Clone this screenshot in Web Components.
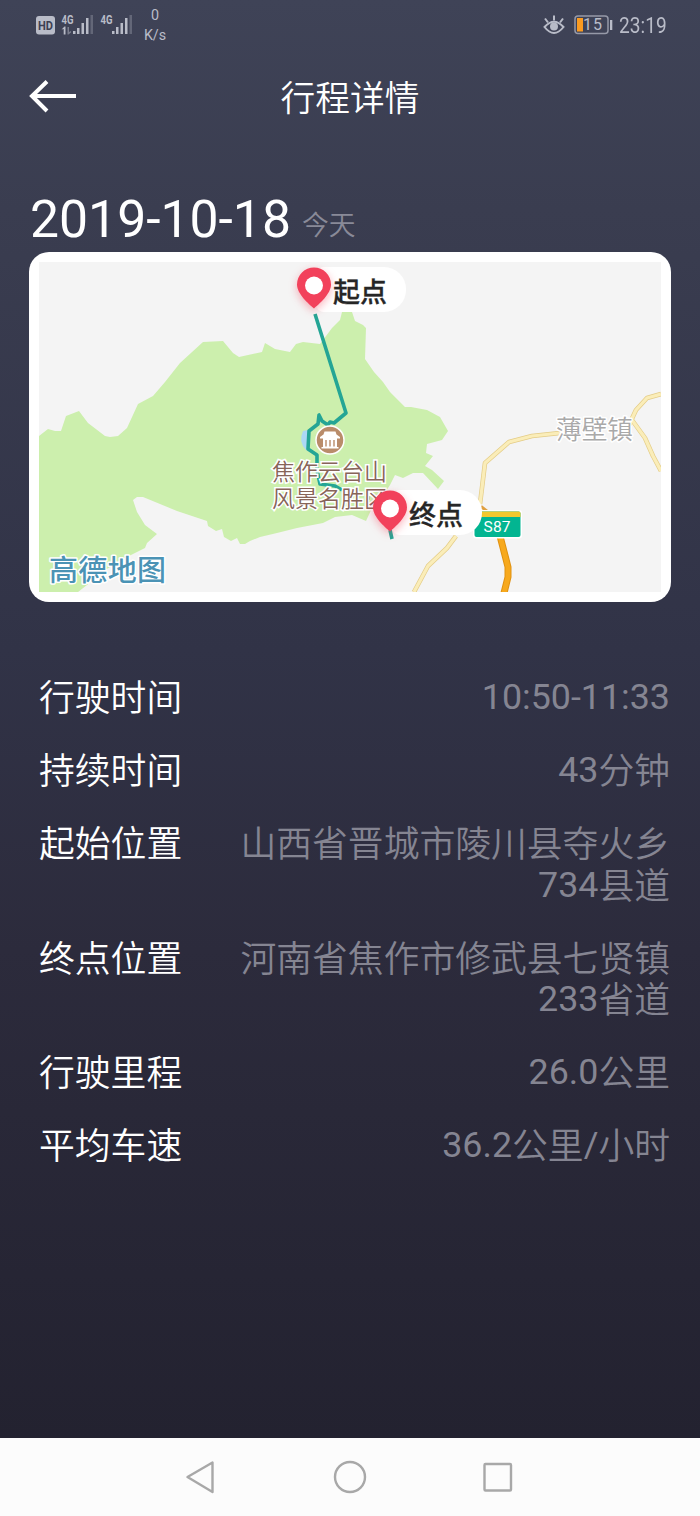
<!DOCTYPE html>
<html lang="zh-CN">
<head>
<meta charset="utf-8">
<title>行程详情</title>
<style>
html,body{margin:0;height:100%}
body{font-family:Roboto,"Noto Sans CJK SC",sans-serif}
</style>
</head>
<body>
<trip-page></trip-page>
<script>
const define = (name, html) => customElements.define(name, class extends HTMLElement {
  constructor() {
    super();
    const t = document.createElement('template');
    t.innerHTML = html;
    this.attachShadow({ mode: 'open' }).append(t.content.cloneNode(true));
  }
});

define('status-bar', `
<style>
:host{display:flex;height:50px;box-sizing:border-box;padding:0 33px 0 35px;justify-content:space-between;color:#b9bcc8}
.l,.r{display:flex;align-items:center}
svg{display:block}
.net{display:flex;flex-direction:column;align-items:center;font-size:14.300px;line-height:20px;margin-left:9px;width:24px;white-space:nowrap}
.batt{position:relative;width:39px;height:20px;margin:0 6px 0 9px}
.batt span{position:absolute;left:9px;top:0;font-size:16px;line-height:20px;letter-spacing:1px}
.time{font-size:22.5px;line-height:50px;width:48px;white-space:nowrap}
.time span{display:inline-block;transform:scaleX(.85);transform-origin:0 50%}
</style>
<div class="l">
<svg width="99" height="50" viewBox="35 0 99 50" fill="#b9bcc8" font-family="Roboto" font-weight="700">
<rect x="36" y="16" width="19" height="18.5" rx="3"/>
<text x="38" y="30" font-size="13" textLength="15" lengthAdjust="spacingAndGlyphs" fill="#3d4053">HD</text>
<text x="61.5" y="23.500" font-size="12" textLength="12" lengthAdjust="spacingAndGlyphs">4G</text>
<path d="M61.500 29.500l3-3h1v8h-1.800v-5.500z"/><path d="M67.500 27h1.500v5l2-1v1.500l-2.500 2h-1z" opacity=".5"/>
<rect x="73" y="31" width="2.500" height="3"/><rect x="77" y="28" width="2.500" height="6"/><rect x="81.500" y="23" width="2.500" height="11"/><rect x="86" y="18" width="2.500" height="16"/><rect x="90.500" y="15" width="2.500" height="19" opacity=".3"/>
<text x="100.500" y="23.500" font-size="12" textLength="12" lengthAdjust="spacingAndGlyphs">4G</text>
<rect x="112" y="31" width="2.500" height="3"/><rect x="116" y="27" width="2.500" height="7"/><rect x="120.500" y="23" width="2.500" height="11"/><rect x="125" y="18" width="2.500" height="16"/><rect x="129.500" y="15" width="2.500" height="19" opacity=".3"/>
</svg>
<div class="net"><span>0</span><span>K/s</span></div>
</div>
<div class="r">
<svg width="22" height="50" viewBox="543 0 22 50" fill="none" stroke="#b9bcc8" stroke-width="2">
<path d="M544.500 27Q554 16.500 563.500 27Q554 39 544.500 27Z"/><circle cx="554" cy="26.500" r="3" fill="#b9bcc8"/><path d="M554 20.500v-5M548 22.500l-3-4M560 22.500l3-4"/></svg>
<div class="batt"><svg width="39" height="20" viewBox="574 15 39 20"><rect x="575" y="16" width="33" height="17.500" rx="3" fill="none" stroke="#9699a8" stroke-width="1.500"/><rect x="577" y="18" width="6" height="13.500" fill="#fb9b20"/><rect x="610" y="20" width="2.300" height="10" fill="#b9bcc8"/></svg><span>15</span></div>
<div class="time"><span>23:19</span></div>
</div>`);

define('title-bar', `
<style>
:host{display:grid;grid-template-columns:48px 1fr 48px;align-items:center;height:92px;padding:0 28px;color:#fff}
h1{margin:0;text-align:center;font-weight:350;font-size:34.700px;line-height:50px;font-family:"Noto Sans CJK SC",sans-serif}
</style>
<svg width="50" height="40" viewBox="28 76 50 40" fill="none" stroke="#fff" stroke-width="4"><path d="M76 96H32M47 81.500L32 96l15 15"/></svg>
<h1><slot></slot></h1>`);

define('trip-date', `
<style>
:host{display:flex;align-items:baseline;height:110px;padding:0 30px;box-sizing:border-box;color:#fff;white-space:nowrap}
.d{font-size:51.700px;line-height:155px;width:272px}
.s{font-size:26.800px;color:#898a98;font-weight:350;line-height:1;transform:translateY(-2px)}
</style>
<span class="d"><slot></slot></span><span class="s"><slot name="note"></slot></span>`);

define('map-pin', `
<style>
:host{position:absolute;display:flex;align-items:flex-start;width:112px;height:46px}
svg{position:absolute;left:0;top:0;overflow:visible;filter:drop-shadow(0 3px 4px rgba(244,67,90,.4))}
.tag{margin-left:20px;width:90px;height:45px;border-radius:8px 22px 22px 8px;background:#fff;box-sizing:border-box;padding-left:17px;font:500 27px/47px "Noto Sans CJK SC",sans-serif;color:#262626;white-space:nowrap;-webkit-text-stroke:.3px #262626}
</style>
<div class="tag"><slot></slot></div>
<svg width="36" height="44" viewBox="0 0 36 44"><path d="M18 41.500C13 37 1 27 1 17.500a17 17 0 0 1 34 0C35 27 23 37 18 41.500Z" fill="#f2415b"/><circle cx="18" cy="18.500" r="9" fill="#fff"/></svg>`);

define('route-map', `
<style>
:host{display:block;position:relative;box-sizing:border-box;height:350px;margin:0 29px;padding:10px;border-radius:20px;background:#fff}
.m{display:block}
.spot{position:absolute;left:243px;top:205px;width:116px;font:350 23px/27px "Noto Sans CJK SC",sans-serif;color:#876459;word-break:break-all;-webkit-text-stroke:3px #fff;paint-order:stroke fill}
</style>
<svg class="m" width="622" height="330" viewBox="39 262 622 330" font-family="Noto Sans CJK SC" stroke-linejoin="round">
<rect x="39" y="262" width="622" height="330" fill="#f4f4f4"/>
<path fill="#ccefad" d="M39 436L48 429 55 431 61 431 66 416 79 411 88 423 105 436 110 437 118 436 127 428 138 404 153 396 165 382 180 363 203 342 223 341 233 353 239 357 262 352 265 343 275 349 290 352 296 344 303 342 320 344 332 328 340 320 342 312 352 312 355 321 363 325 366 328 365 359 374 372 383 382 390 392 405 407 411 407 427 410 440 417 448 431 442 440 427 444 426 453 433 456 425 466 432 470 444 481 438 489 423 473 413 473 403 478 395 475 390 485 380 500 372 508 366 521 352 515 335 517 323 523 297 528 277 533 260 537 250 541 245 544 240 544 237 538 231 541 224 537 222 529 216 531 208 526 207 521 177 511 160 504 143 497 137 497 133 500 137 512 145 525 157 534 147 543 145 548 127 557 105 570 87 585 78 592 39 592Z"/>
<path d="M480 504L485 463 509 442 532 436 560 433M661 394L647 398 636 410 629 425M632 420L645 438 653 456 661 471M456 536L447 548 428 566 414 592" fill="none" stroke="#e4cc86" stroke-width="4.600"/>
<path d="M480 504L485 463 509 442 532 436 560 433M661 394L647 398 636 410 629 425M632 420L645 438 653 456 661 471M456 536L447 548 428 566 414 592" fill="none" stroke="#faedb9" stroke-width="3.200"/>
<path d="M481 506.500L488 512" fill="none" stroke="#e0a040" stroke-width="3"/>
<path d="M500 536L508 567V577L504 593" fill="none" stroke="#e09110" stroke-width="7"/>
<path d="M500 536L508 567V577L504 593" fill="none" stroke="#f7a91d" stroke-width="5"/>
<path d="M303 431q-5 11 3 19l4 2-2-22z" fill="#acd8f5"/>
<path d="M315 314L346 413 334 423 330 422 328 425 322 421 319 415 318 424 309 431 308 449 317 455 317 470 320 484 335 486 342 490M365 498h5M390 530l2 9" fill="none" stroke="#24a595" stroke-width="3.600"/>
<circle cx="330" cy="440" r="14" fill="#b98c6a" stroke="#fff" stroke-width="1.500"/>
<path d="M324.500 431.500h11l1 3 3.500 2.500v1.500h-20v-1.500l3.500-2.500zM323 438h14v10h-14zM321.500 447h17v1.500h-17z" fill="#fff"/>
<path d="M326 440v6.500M330 440v6.500M334 440v6.500" stroke="#b98c6a" stroke-width="1.400"/>
<text x="556" y="438.500" font-size="25.700" fill="#a9a9a9" stroke="#fff" stroke-width="3" paint-order="stroke" font-weight="350">薄壁镇</text>
<rect x="473" y="510" width="49" height="28.500" rx="3" fill="#fff"/><rect x="474.500" y="511.500" width="46" height="25.500" rx="2" fill="#02b591"/><path d="M476 511.500h43q1.500 0 1.500 1.500v4h-46v-4z" fill="#f2c82e"/>
<text x="483.500" y="531.500" font-family="Roboto" font-size="15.500" textLength="27" fill="#fff">S87</text>
<text x="49" y="581" font-size="29" font-weight="500" textLength="117" fill="#4b93b5" stroke="#fff" stroke-width="3" paint-order="stroke">高德地图</text>
</svg>
<div class="spot">焦作云台山风景名胜区</div>
<map-pin style="left:267px;top:15px">起点</map-pin>
<map-pin style="left:343px;top:238px">终点</map-pin>`);

define('detail-row', `
<style>
:host{display:flex;justify-content:space-between;align-items:flex-start;font-size:35.800px;line-height:41.500px;font-weight:350}
.k{color:#fff;flex:none}
.v{color:#858592;text-align:right;width:440px}
::slotted(b){font-weight:400;vertical-align:2px;line-height:1}
</style>
<span class="k"><slot name="key"></slot></span><span class="v"><slot></slot></span>`);

define('nav-bar', `
<style>
:host{display:block;background:#fcfcfc;height:78px}
svg{display:block}
</style>
<svg width="700" height="78" viewBox="0 1438 700 78" fill="none" stroke="#a8a8a8" stroke-width="2.400" stroke-linejoin="round"><path d="M187.500 1477L212.500 1462.500V1492Z"/><circle cx="350" cy="1477" r="15"/><rect x="484.500" y="1464" width="26.500" height="26.500" rx="1"/></svg>`);

define('trip-page', `
<style>
:host{display:flex;flex-direction:column;width:700px;height:1516px;background:linear-gradient(#3f4357 0,#3a3d50 210px,#313347 650px,#2c2b3c 950px,#232230 1438px)}
.rows{display:flex;flex-direction:column;gap:31.500px;padding:77px 30px 0 39px;flex:1}
</style>
<status-bar></status-bar>
<title-bar>行程详情</title-bar>
<trip-date>2019-10-18<span slot="note">今天</span></trip-date>
<route-map></route-map>
<div class="rows">
<detail-row><span slot="key">行驶时间</span><b>10:50-11:33</b></detail-row>
<detail-row><span slot="key">持续时间</span><b>43</b>分钟</detail-row>
<detail-row><span slot="key">起始位置</span>山西省晋城市陵川县夺火乡<b>734</b>县道</detail-row>
<detail-row><span slot="key">终点位置</span>河南省焦作市修武县七贤镇<b>233</b>省道</detail-row>
<detail-row><span slot="key">行驶里程</span><b>26.0</b>公里</detail-row>
<detail-row><span slot="key">平均车速</span><b>36.2</b>公里<b>/</b>小时</detail-row>
</div>
<nav-bar></nav-bar>`);
</script>
</body>
</html>
